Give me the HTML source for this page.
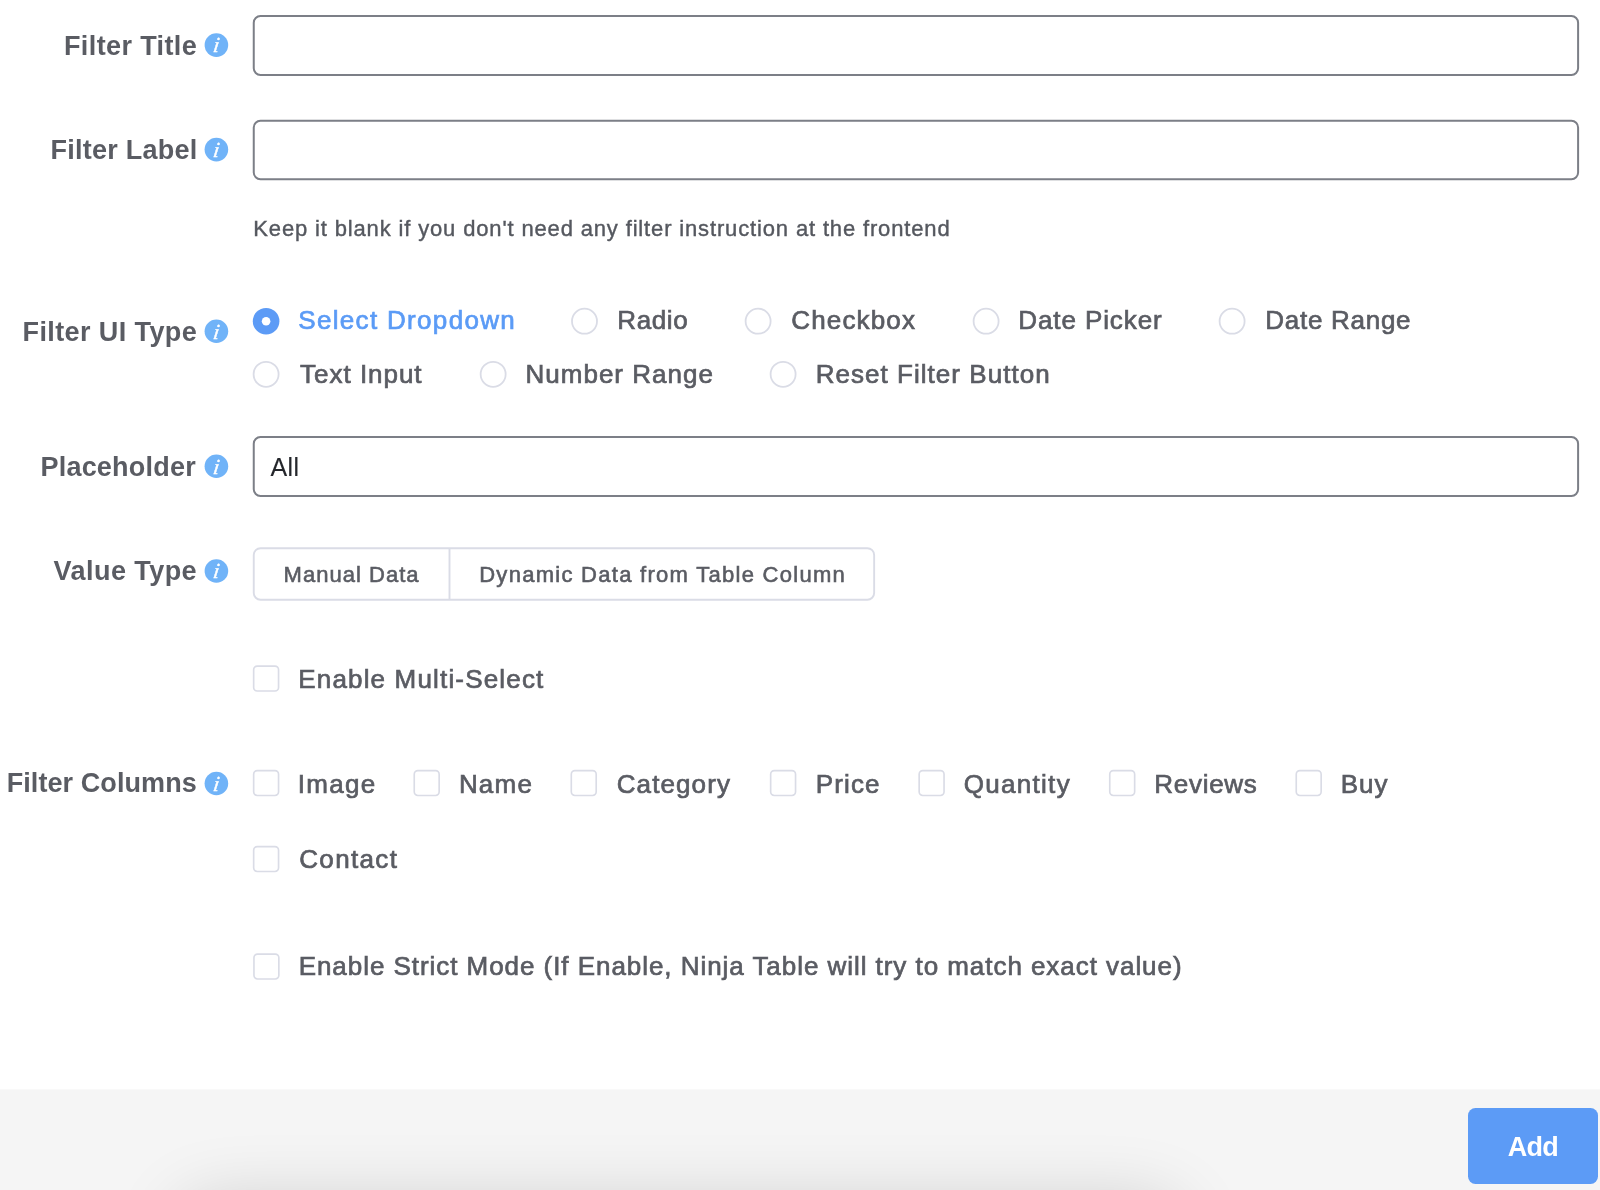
<!DOCTYPE html>
<html><head><meta charset="utf-8"><title>Filter</title>
<style>
*{box-sizing:border-box;margin:0;padding:0}
html,body{width:1600px;height:1190px;background:#fff;overflow:hidden}
body{position:relative;font-family:"Liberation Sans",sans-serif;color:#5b5e66}
#g{position:absolute;left:0;top:0;width:1600px;height:1190px;will-change:transform}
.x{position:absolute;white-space:nowrap}
.lbl{font-size:27px;font-weight:bold;line-height:33px;}
.t{font-size:26px;font-weight:normal;line-height:32px;-webkit-text-stroke:0.7px currentColor;}
.help{font-size:22px;font-weight:normal;line-height:28px;-webkit-text-stroke:0.4px currentColor;}
.inp{font-size:25px;font-weight:normal;line-height:31px;-webkit-text-stroke:0.1px currentColor;}
.btn{font-size:22px;font-weight:normal;line-height:28px;-webkit-text-stroke:0.6px currentColor;}
.add{font-size:27px;font-weight:bold;line-height:33px;}
</style></head><body>
<svg id="g" viewBox="0 0 1600 1190">
<defs><filter id="bl" x="-20%" y="-300%" width="140%" height="700%"><feGaussianBlur stdDeviation="36"/></filter>
</defs>
<rect x="0" y="1089.4" width="1600" height="101" fill="#f5f5f5"/>
<rect x="180" y="1203" width="1000" height="80" rx="30" fill="#000" opacity=".17" filter="url(#bl)"/>
<rect x="1468" y="1108" width="130" height="76" rx="7.5" fill="#5c9bf6"/>
<rect x="253.75" y="16" width="1324.35" height="58.9" rx="6.7" fill="#fff" stroke="#7c7f87" stroke-width="2"/>
<rect x="253.75" y="120.75" width="1324.35" height="58.5" rx="6.7" fill="#fff" stroke="#7c7f87" stroke-width="2"/>
<rect x="253.75" y="437.1" width="1324.35" height="58.8" rx="6.7" fill="#fff" stroke="#7c7f87" stroke-width="2"/>
<rect x="253.75" y="548.2" width="620.4" height="51.55" rx="6.8" fill="#fff" stroke="#dadce6" stroke-width="1.9"/>
<path d="M449.5 548.35 V599.6" stroke="#dadce6" stroke-width="1.9"/>
<circle cx="266.1" cy="321.2" r="13.3" fill="#5c9bf6"/><circle cx="266.1" cy="321.2" r="4.3" fill="#fff"/>
<circle cx="584.5" cy="321.2" r="12.5" fill="#fff" stroke="#dadce6" stroke-width="1.8"/>
<circle cx="758.1" cy="321.2" r="12.5" fill="#fff" stroke="#dadce6" stroke-width="1.8"/>
<circle cx="986.1" cy="321.2" r="12.5" fill="#fff" stroke="#dadce6" stroke-width="1.8"/>
<circle cx="1232.1" cy="321.2" r="12.5" fill="#fff" stroke="#dadce6" stroke-width="1.8"/>
<circle cx="266.1" cy="374.3" r="12.5" fill="#fff" stroke="#dadce6" stroke-width="1.8"/>
<circle cx="493.15" cy="374.3" r="12.5" fill="#fff" stroke="#dadce6" stroke-width="1.8"/>
<circle cx="783.1" cy="374.3" r="12.5" fill="#fff" stroke="#dadce6" stroke-width="1.8"/>
<rect x="253.65" y="666.1" width="24.9" height="24.9" rx="3.6" fill="#fff" stroke="#dadce6" stroke-width="1.65"/>
<rect x="253.65" y="770.55" width="24.9" height="24.9" rx="3.6" fill="#fff" stroke="#dadce6" stroke-width="1.65"/>
<rect x="414.25" y="770.55" width="24.9" height="24.9" rx="3.6" fill="#fff" stroke="#dadce6" stroke-width="1.65"/>
<rect x="571.3" y="770.55" width="24.9" height="24.9" rx="3.6" fill="#fff" stroke="#dadce6" stroke-width="1.65"/>
<rect x="770.65" y="770.55" width="24.9" height="24.9" rx="3.6" fill="#fff" stroke="#dadce6" stroke-width="1.65"/>
<rect x="919.15" y="770.55" width="24.9" height="24.9" rx="3.6" fill="#fff" stroke="#dadce6" stroke-width="1.65"/>
<rect x="1109.75" y="770.55" width="24.9" height="24.9" rx="3.6" fill="#fff" stroke="#dadce6" stroke-width="1.65"/>
<rect x="1296.25" y="770.55" width="24.9" height="24.9" rx="3.6" fill="#fff" stroke="#dadce6" stroke-width="1.65"/>
<rect x="253.65" y="846.55" width="24.9" height="24.9" rx="3.6" fill="#fff" stroke="#dadce6" stroke-width="1.65"/>
<rect x="253.95" y="954.05" width="24.9" height="24.9" rx="3.6" fill="#fff" stroke="#dadce6" stroke-width="1.65"/>
<g transform="translate(216.4 45.1)"><circle r="11.8" fill="#70b3f8"/><text transform="translate(-0.8 7.3) skewX(-8)" text-anchor="middle" font-family="Liberation Serif, serif" font-style="italic" font-size="21.5px" fill="#fff" stroke="#fff" stroke-width=".4">i</text></g>
<g transform="translate(216.4 149.6)"><circle r="11.8" fill="#70b3f8"/><text transform="translate(-0.8 7.3) skewX(-8)" text-anchor="middle" font-family="Liberation Serif, serif" font-style="italic" font-size="21.5px" fill="#fff" stroke="#fff" stroke-width=".4">i</text></g>
<g transform="translate(216.4 331.25)"><circle r="11.8" fill="#70b3f8"/><text transform="translate(-0.8 7.3) skewX(-8)" text-anchor="middle" font-family="Liberation Serif, serif" font-style="italic" font-size="21.5px" fill="#fff" stroke="#fff" stroke-width=".4">i</text></g>
<g transform="translate(216.4 466.25)"><circle r="11.8" fill="#70b3f8"/><text transform="translate(-0.8 7.3) skewX(-8)" text-anchor="middle" font-family="Liberation Serif, serif" font-style="italic" font-size="21.5px" fill="#fff" stroke="#fff" stroke-width=".4">i</text></g>
<g transform="translate(216.4 571)"><circle r="11.8" fill="#70b3f8"/><text transform="translate(-0.8 7.3) skewX(-8)" text-anchor="middle" font-family="Liberation Serif, serif" font-style="italic" font-size="21.5px" fill="#fff" stroke="#fff" stroke-width=".4">i</text></g>
<g transform="translate(216.4 783.5)"><circle r="11.8" fill="#70b3f8"/><text transform="translate(-0.8 7.3) skewX(-8)" text-anchor="middle" font-family="Liberation Serif, serif" font-style="italic" font-size="21.5px" fill="#fff" stroke="#fff" stroke-width=".4">i</text></g>
</svg>
<div class="x lbl" style="left:63px;top:30px;letter-spacing:0.38px;color:#5a5c63;transform:translate3d(0.99px,0,0)">Filter Title</div>
<div class="x lbl" style="left:50px;top:134px;letter-spacing:0.24px;color:#5a5c63;transform:translate3d(0.49px,0,0)">Filter Label</div>
<div class="x lbl" style="left:22px;top:316px;letter-spacing:0.4px;color:#5a5c63;transform:translate3d(0.49px,0,0)">Filter UI Type</div>
<div class="x lbl" style="left:40px;top:451px;letter-spacing:0.21px;color:#5a5c63;transform:translate3d(0.49px,0,0)">Placeholder</div>
<div class="x lbl" style="left:53px;top:555px;letter-spacing:0.44px;color:#5a5c63;transform:translate3d(0.62px,0,0)">Value Type</div>
<div class="x lbl" style="left:6px;top:767px;letter-spacing:0.08px;color:#5a5c63;transform:translate3d(0.69px,0,0)">Filter Columns</div>
<div class="x t" style="left:298px;top:304px;letter-spacing:1.32px;color:#5b9bf6;transform:translate3d(0.27px,0,0)">Select Dropdown</div>
<div class="x t" style="left:617px;top:304px;letter-spacing:0.64px;color:#5a5c63;transform:translate3d(0.24px,0,0)">Radio</div>
<div class="x t" style="left:791px;top:304px;letter-spacing:1.17px;color:#5a5c63;transform:translate3d(0.18px,0,0)">Checkbox</div>
<div class="x t" style="left:1018px;top:304px;letter-spacing:0.91px;color:#5a5c63;transform:translate3d(0.24px,0,0)">Date Picker</div>
<div class="x t" style="left:1265px;top:304px;letter-spacing:0.73px;color:#5a5c63;transform:translate3d(0.24px,0,0)">Date Range</div>
<div class="x t" style="left:300px;top:358px;letter-spacing:0.97px;color:#5a5c63;transform:translate3d(0.12px,0,0)">Text Input</div>
<div class="x t" style="left:525px;top:358px;letter-spacing:1.01px;color:#5a5c63;transform:translate3d(0.49px,0,0)">Number Range</div>
<div class="x t" style="left:815px;top:358px;letter-spacing:1.03px;color:#5a5c63;transform:translate3d(0.74px,0,0)">Reset Filter Button</div>
<div class="x t" style="left:298px;top:663px;letter-spacing:1.17px;color:#5a5c63;transform:translate3d(0.24px,0,0)">Enable Multi-Select</div>
<div class="x t" style="left:297px;top:768px;letter-spacing:1.34px;color:#5a5c63;transform:translate3d(0.64px,0,0)">Image</div>
<div class="x t" style="left:458px;top:768px;letter-spacing:1.2px;color:#5a5c63;transform:translate3d(0.89px,0,0)">Name</div>
<div class="x t" style="left:616px;top:768px;letter-spacing:1.11px;color:#5a5c63;transform:translate3d(0.68px,0,0)">Category</div>
<div class="x t" style="left:815px;top:768px;letter-spacing:1.14px;color:#5a5c63;transform:translate3d(0.74px,0,0)">Price</div>
<div class="x t" style="left:963px;top:768px;letter-spacing:1.3px;color:#5a5c63;transform:translate3d(0.7px,0,0)">Quantity</div>
<div class="x t" style="left:1154px;top:768px;letter-spacing:0.72px;color:#5a5c63;transform:translate3d(0.24px,0,0)">Reviews</div>
<div class="x t" style="left:1340px;top:768px;letter-spacing:1.02px;color:#5a5c63;transform:translate3d(0.74px,0,0)">Buy</div>
<div class="x t" style="left:299px;top:843px;letter-spacing:1.36px;color:#5a5c63;transform:translate3d(0.18px,0,0)">Contact</div>
<div class="x t" style="left:298px;top:950px;letter-spacing:0.95px;color:#5a5c63;transform:translate3d(0.64px,0,0)">Enable Strict Mode (If Enable, Ninja Table will try to match exact value)</div>
<div class="x help" style="left:253px;top:215px;letter-spacing:0.85px;color:#55585f;transform:translate3d(0.3px,0,0)">Keep it blank if you don't need any filter instruction at the frontend</div>
<div class="x inp" style="left:270px;top:452px;letter-spacing:0.31px;color:#24262b;transform:translate3d(0.57px,0,0)">All</div>
<div class="x btn" style="left:283px;top:561px;letter-spacing:1.02px;color:#5a5c63;transform:translate3d(0.58px,0,0)">Manual Data</div>
<div class="x btn" style="left:479px;top:561px;letter-spacing:1.28px;color:#5a5c63;transform:translate3d(0.18px,0,0)">Dynamic Data from Table Column</div>
<div class="x add" style="left:1507px;top:1131px;letter-spacing:-0.65px;color:#ffffff;transform:translate3d(0.63px,0,0)">Add</div>
</body></html>
